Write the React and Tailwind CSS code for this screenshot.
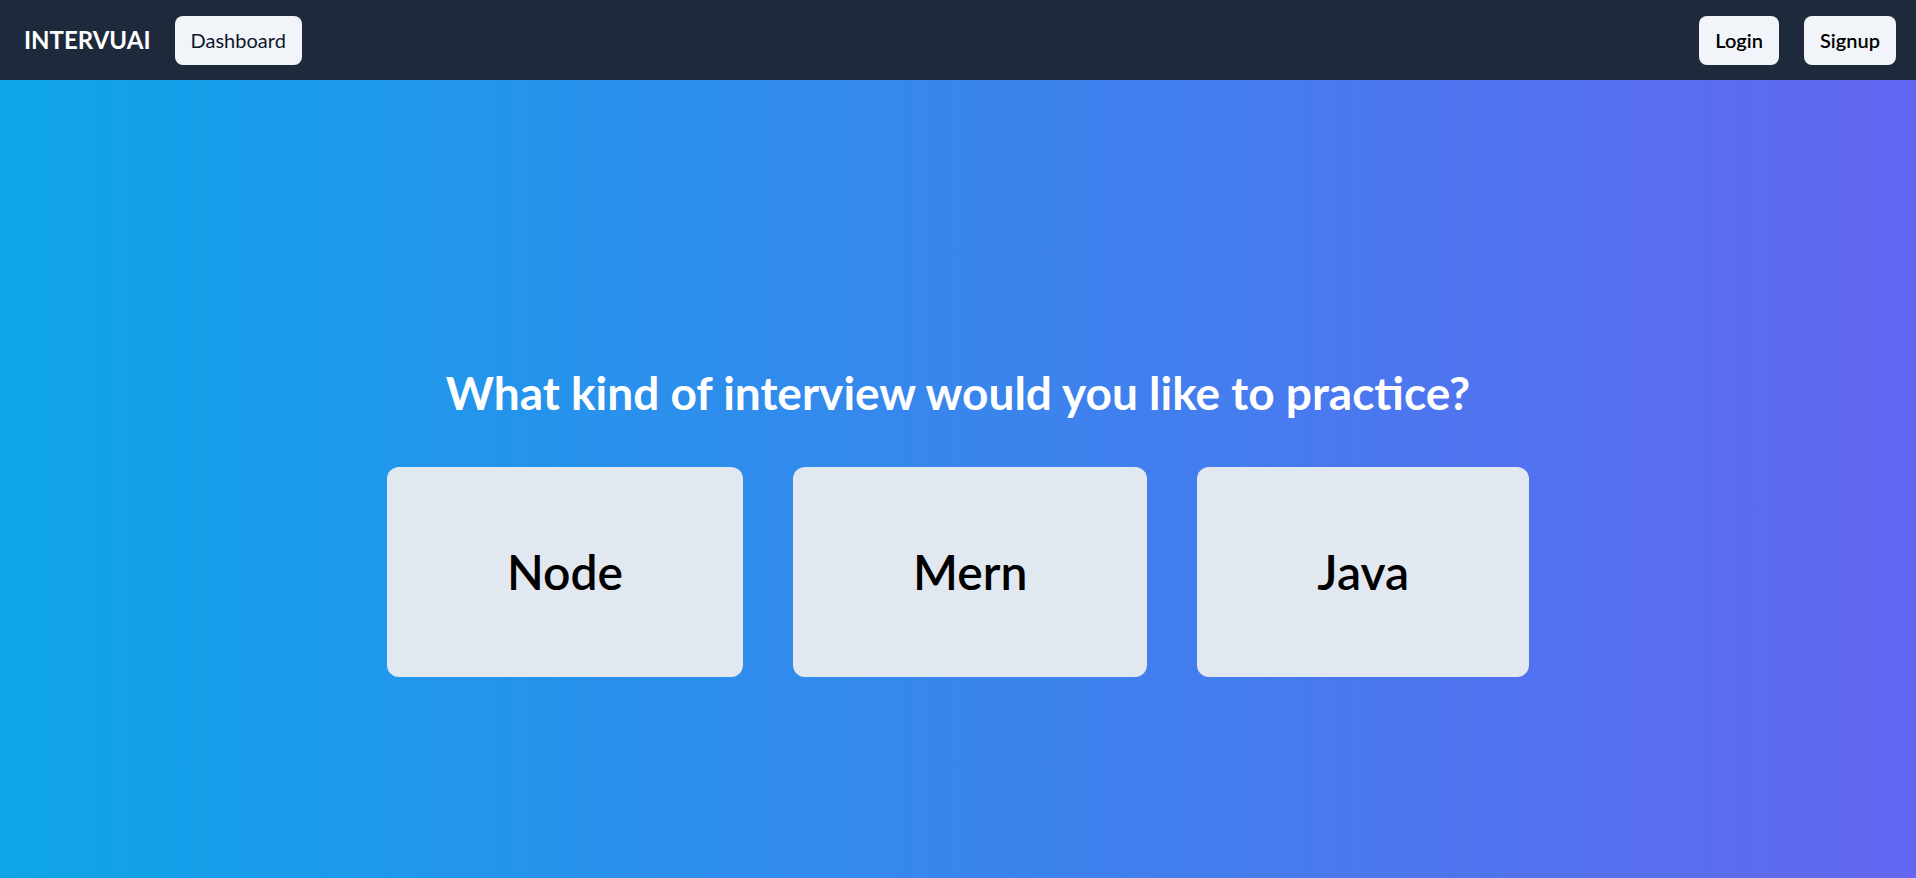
// ========================== IMPORTS ==========================
import React from "react";

// ========================== DATA ==========================
const topics = ["Node", "Mern", "Java"];

const font = { fontFamily: 'Lato, "Open Sans", sans-serif' };

// ========================== NAVBAR ==========================
const Navbar = () => (
  <nav className="h-20 bg-[#1e293b] flex items-center justify-between pl-6 pr-5">
    <div className="flex items-center gap-6">
      <span className="text-white text-2xl font-bold">INTERVUAI</span>
      <button className="bg-[#f1f5f9] text-[#0f172a] text-xl px-4 h-[49px] rounded-lg">
        Dashboard
      </button>
    </div>
    <div className="flex items-center gap-[25px]">
      <button className="bg-[#f1f5f9] text-black text-xl font-semibold px-4 h-[49px] rounded-lg">
        Login
      </button>
      <button className="bg-[#f1f5f9] text-black text-xl font-semibold px-4 h-[49px] rounded-lg">
        Signup
      </button>
    </div>
  </nav>
);

// ========================== APP ==========================
export default function App() {
  return (
    <div style={font}>
      <Navbar />

      {/* ================= MAIN ================= */}
      <main className="min-h-screen bg-[linear-gradient(to_right,#0ea5e9,#6366f1)] flex flex-col items-center justify-center pt-2">
        <h1 className="text-white text-[46px] leading-[48px] font-bold mb-[50px]">
          What kind of interview would you like to practice?
        </h1>

        <div className="flex gap-[50px]">
          {topics.map((t) => (
            <button
              key={t}
              className="bg-[#e2e8f0] text-black text-5xl leading-none font-semibold px-[120px] py-[81px] rounded-xl"
            >
              {t}
            </button>
          ))}
        </div>
      </main>
    </div>
  );
}
